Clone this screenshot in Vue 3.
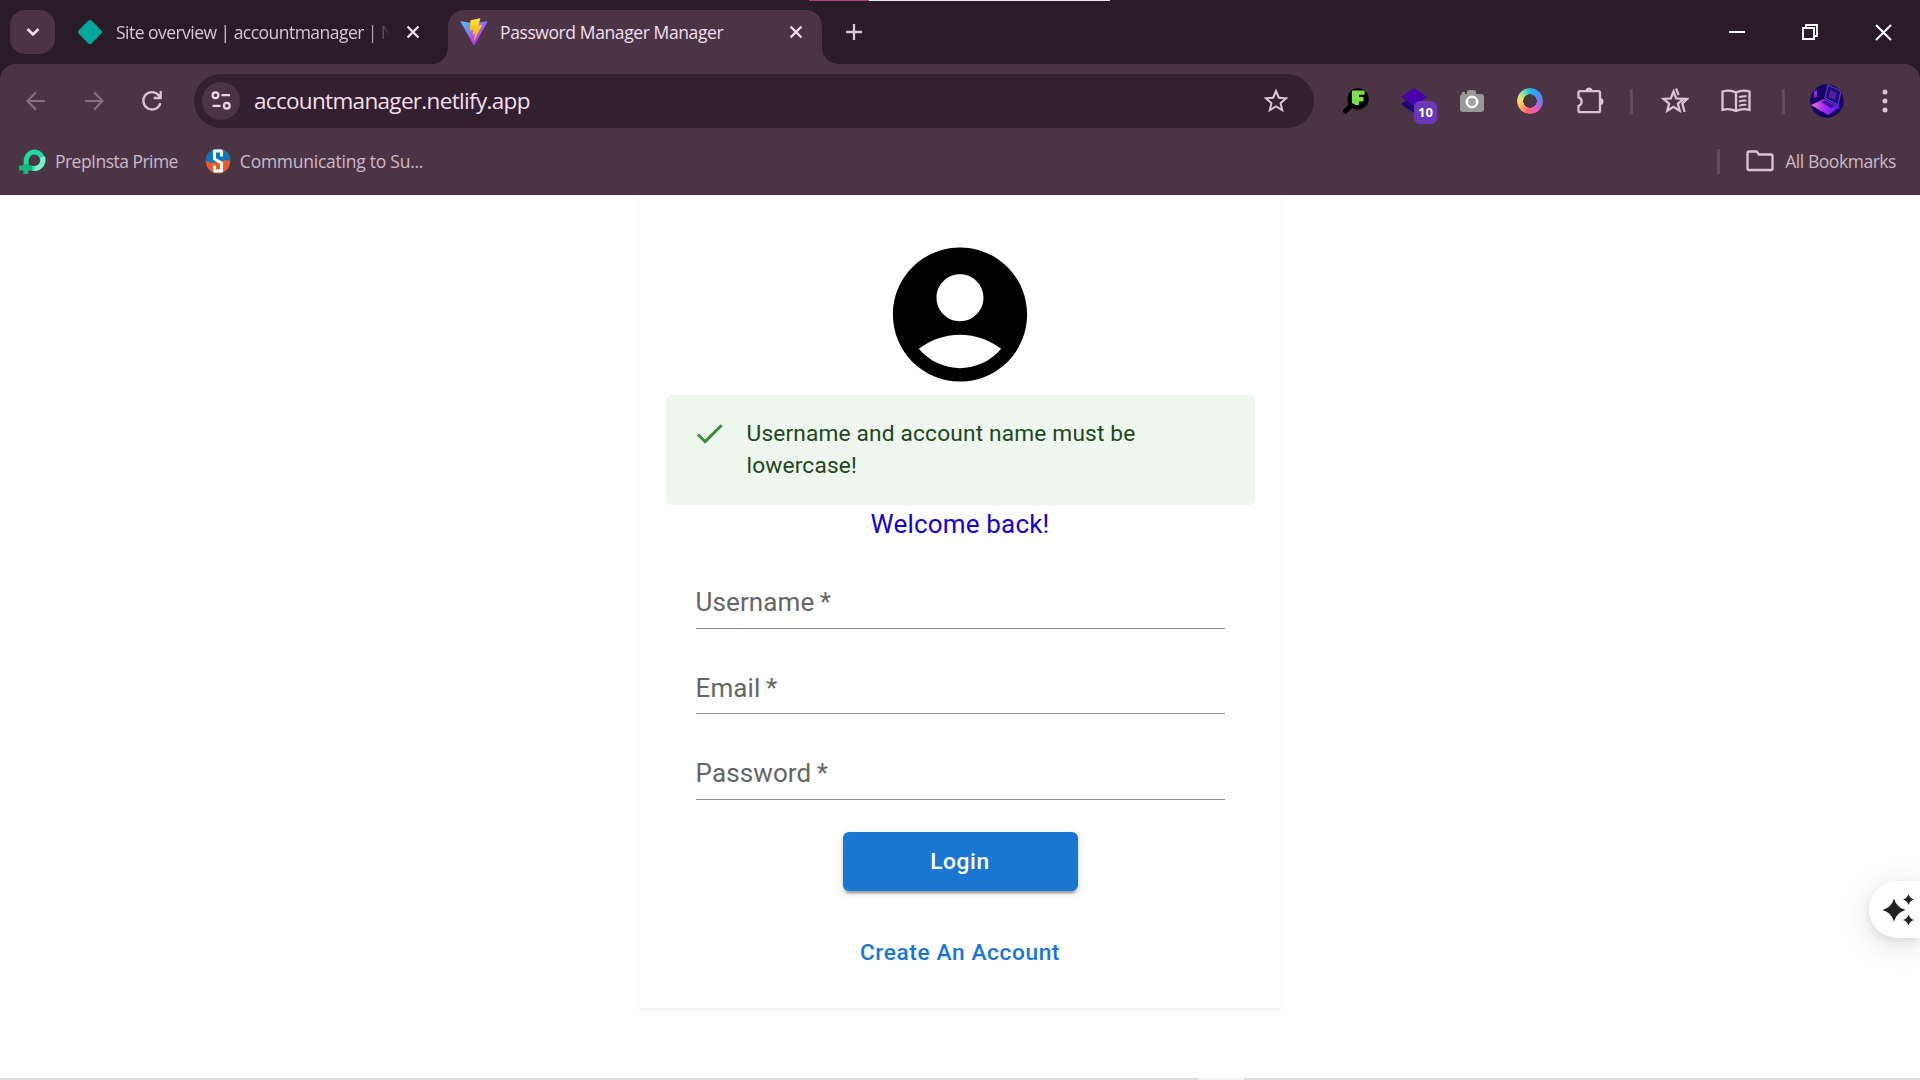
<script setup>
const fields = ['Username', 'Email', 'Password']
</script>

<template>
  <div class="screen">
    <header class="browser">
      <div class="tabstrip">
        <div class="progress"></div>
        <button class="tabsearch">
          <svg width="14" height="10" viewBox="0 0 14 10"><path d="M1.5 2 7 7.5 12.500 2" fill="none" stroke="#f3dcee" stroke-width="2.6" /></svg>
        </button>
        <div class="tab idle">
          <svg class="fav" width="26" height="26" viewBox="0 0 26 26"><path d="M11.400 1.600q1.600-1.300 3.200 0l9.800 9.800q1.300 1.600 0 3.200l-9.800 9.800q-1.600 1.300-3.200 0l-9.800-9.800q-1.300-1.600 0-3.200z" fill="#00a89c" /></svg>
          <span class="title one">Site overview | accountmanager | N</span>
          <svg class="x" width="14" height="14" viewBox="0 0 14 14"><path d="M1.500 1.500l11 11m0-11l-11 11" stroke="#f0dcea" stroke-width="2.300" /></svg>
        </div>
        <div class="tab active">
          <svg class="fav" width="28" height="28" viewBox="0 0 410 404">
            <defs>
              <linearGradient id="va" x1="6" y1="33" x2="235" y2="344" gradientUnits="userSpaceOnUse"><stop stop-color="#41d1ff" /><stop offset="1" stop-color="#bd34fe" /></linearGradient>
              <linearGradient id="vb" x1="194.650" y1="8.800" x2="236" y2="293" gradientUnits="userSpaceOnUse"><stop stop-color="#ffea83" /><stop offset=".083" stop-color="#ffdd35" /><stop offset="1" stop-color="#ffa800" /></linearGradient>
            </defs>
            <path fill="url(#va)" d="M399.600 59.500 215.600 388.500c-3.800 6.800-13.500 6.800-17.300.1L10.600 59.500c-4.200-7.300 2.100-16.200 10.400-14.700l184.200 32.900c1.200.2 2.400.2 3.500 0l180.300-32.900c8.300-1.500 14.600 7.300 10.600 14.700z" />
            <path fill="url(#vb)" d="M293 1.600 156.800 28.200c-2.200.4-3.900 2.300-4 4.600l-8.400 141.500c-.2 3.300 2.900 5.900 6.100 5.200l37.900-8.800c3.600-.8 6.800 2.300 6 5.900l-11.300 55.200c-.8 3.700 2.700 6.900 6.300 5.800l23.500-7.100c3.600-1.100 7.100 2.100 6.300 5.800l-17.900 86.600c-1.100 5.400 6.100 8.400 9.100 3.700l2-3.100 111-221.400c1.900-3.700-1.400-7.900-5.400-7.200l-39 7.600c-3.700.7-6.800-2.800-5.800-6.300L298.700 7.900c1-3.600-2.100-7-5.700-6.300z" />
          </svg>
          <span class="title two">Password Manager Manager</span>
          <svg class="x" width="14" height="14" viewBox="0 0 14 14"><path d="M1.500 1.500l11 11m0-11l-11 11" stroke="#f5e0f0" stroke-width="2.300" /></svg>
        </div>
        <svg class="plus" width="18" height="18" viewBox="0 0 18 18"><path d="M9 1v16M1 9h16" stroke="#dcc6d8" stroke-width="2.300" /></svg>
        <div class="window">
          <svg width="16" height="16"><path d="M0 8h16" stroke="#fff" stroke-width="2" /></svg>
          <svg width="16" height="16"><path d="M1 4h11v11H1zM4 4V1h11v11h-3" fill="none" stroke="#fff" stroke-width="1.800" /></svg>
          <svg width="17" height="17"><path d="M1 1l15 15M16 1L1 16" stroke="#fff" stroke-width="2" /></svg>
        </div>
      </div>

      <div class="toolbar">
        <svg class="back" width="20" height="20" viewBox="0 0 20 20"><path d="M19 10H2M10 1.200 1.500 10l8.500 8.800" fill="none" stroke="#8a7085" stroke-width="2.100" /></svg>
        <svg class="forward" width="20" height="20" viewBox="0 0 20 20"><path d="M1 10h17M10 1.200l8.500 8.800-8.500 8.800" fill="none" stroke="#8a7085" stroke-width="2.100" /></svg>
        <svg class="reload" width="22" height="22" viewBox="0 0 22 22"><path d="M19.400 13.100A8.700 8.700 0 1 1 17.700 5.200L19.500 7M19.700 1v7h-7" fill="none" stroke="#dcc3d8" stroke-width="2.300" /></svg>
        <div class="omnibox">
          <span class="tune"><svg width="20" height="20" viewBox="0 0 20 20" fill="none" stroke="#ecd7e8" stroke-width="2.200"><circle cx="4.500" cy="4.200" r="2.900" /><path d="M10.500 4.200h8.500M1.500 14.800h8" /><circle cx="15.800" cy="14.800" r="2.900" /></svg></span>
          <span class="url">accountmanager.netlify.app</span>
          <svg class="star" width="30" height="30" viewBox="0 0 24 24"><path fill="#dcc3d8" d="m22 9.240-7.190-.62L12 2 9.190 8.630 2 9.240l5.460 4.730L5.820 21 12 17.270 18.180 21l-1.630-7.030zM12 15.400l-3.760 2.270 1-4.280-3.320-2.880 4.380-.38L12 6.100l1.710 4.040 4.380.38-3.320 2.880 1 4.280z" /></svg>
        </div>
        <div class="extensions">
          <svg class="e1" width="28" height="28" viewBox="0 0 28 28"><path d="M10 17.500 3.500 24" stroke="#000" stroke-width="5" stroke-linecap="round" /><circle cx="16" cy="12" r="10.700" fill="#000" /><path d="M10 3.500h12.500v4.200H17v2.400h4.500v4.500H17v3.400h-3.500l-3.500-2z" fill="#7be04a" /></svg>
          <div class="e2">
            <svg width="28" height="28" viewBox="0 0 28 28"><path d="m1 17 13-8 13 8-13 9z" fill="#1d0070" /><path d="m1 10 13-9 13 9-13 9z" fill="#4700ac" /></svg>
            <span class="badge">10</span>
          </div>
          <svg class="e3" width="26" height="24" viewBox="0 0 26 24"><path d="M8 5V3q0-2 2-2h5q2 0 2 2v2h5q3 0 3 3v12q0 3-3 3H4q-3 0-3-3V8q0-2 2-3V3h3v2z" fill="#999" /><circle cx="13" cy="13" r="5.200" fill="#a4a4a4" stroke="#fff" stroke-width="2.400" /></svg>
          <span class="ring"></span>
          <svg class="puzzle" width="28" height="28" viewBox="0 0 28 28"><path d="M4 4.200h18.500q1.500 0 1.500 1.500v18q0 1.500-1.500 1.500H4q-1.500 0-1.500-1.500v-4.800a4.500 4.500 0 0 0 0-8.600V5.700q0-1.500 1.500-1.500z" fill="none" stroke="#dcc3d8" stroke-width="2.300" /><path d="M9.500 4a3.500 3.500 0 0 1 7 0zM24 11a3.500 3.500 0 0 1 0 7z" fill="#dcc3d8" /></svg>
        </div>
        <i class="rule r1"></i>
        <svg class="favs" width="28" height="26" viewBox="0 0 28 26"><path d="M12.500 3.500l2.700 6.800 7.300.6-5.600 4.700 1.800 7.100-6.200-3.900-6.200 3.900 1.800-7.100-5.600-4.700 7.300-.6z" fill="none" stroke="#dcc3d8" stroke-width="2.300" /><path d="M15 .5l2.700 6.500M20.800 10.900h5.400l-4.900 4.500 2.300 8.600" fill="none" stroke="#dcc3d8" stroke-width="2.200" /></svg>
        <svg class="book" width="30" height="24" viewBox="0 0 30 24" fill="none" stroke="#dcc3d8" stroke-width="2.300"><path d="M15 3.500q-6-3-13.500-1v18.300q7-2 13.500 1.200 6.500-3.200 13.500-1.200V2.500q-7.500-2-13.500 1zV22" /><path d="M18 8.200q3.500-1.300 7.500-.9M18 12.500q3.500-1.300 7.500-.9M18 16.800q3.500-1.300 7.500-.9" stroke-width="1.900" /></svg>
        <i class="rule r2"></i>
        <svg class="profile" width="34" height="34" viewBox="0 0 34 34">
          <defs><clipPath id="pc"><circle cx="17" cy="17" r="16.700" /></clipPath><linearGradient id="pg"><stop stop-color="#f07ac8" /><stop offset=".45" stop-color="#a72af5" /><stop offset="1" stop-color="#4b1bf0" /></linearGradient></defs>
          <g clip-path="url(#pc)"><path d="M0 0h34v34H0z" fill="#150363" /><path d="m18 1 13 6-3 14-13-7z" fill="#1f0c7c" stroke="#6336b8" stroke-width="1.200" /><path d="m20 6 7 3-2 7-6-3z" fill="#51209f" /><path d="m1 21 13-6 16 8-12 8z" fill="url(#pg)" /><path d="m11 18 4-1.500 10 5-4 2.500z" fill="#3a129c" /><path d="M4 7l3-1v7l-3 1z" fill="#8a2be0" /></g>
        </svg>
        <svg class="more" width="6" height="24" viewBox="0 0 6 24" fill="#dcc3d8"><circle cx="3" cy="3" r="2.500" /><circle cx="3" cy="12" r="2.500" /><circle cx="3" cy="21" r="2.500" /></svg>
      </div>

      <div class="bookmarks">
        <svg class="prep" width="27" height="27" viewBox="0 0 27 27" fill="none"><path d="M7.200 19.500V11.500A8.200 8.200 0 1 1 15.400 20.500H13" stroke="#1fdd9c" stroke-width="5" /><path d="M15.400 20.500A8.600 8.600 0 0 0 23.500 9" stroke="#7cf0c6" stroke-width="5" /><path d="M0 20h13M6.800 16v10" stroke="#13b981" stroke-width="5" /></svg>
        <span class="b1">PrepInsta Prime</span>
        <svg class="comm" width="26" height="26" viewBox="0 0 26 26"><circle cx="13" cy="13" r="12.300" fill="#ef5a2a" /><path d="M.7 13a12.300 12.300 0 0 1 24.600 0q-6-2-12.300 1-6 2-12.300-1z" fill="#0879be" /><path d="M16.500 8.500V3h-7v8l7 4v8h-7v-5.500" fill="none" stroke="#fff" stroke-width="3" stroke-linejoin="round" /></svg>
        <span class="b2">Communicating to Su...</span>
        <i class="rule"></i>
        <svg class="folder" width="28" height="22" viewBox="0 0 28 22"><path d="M3 1.500h7.500L13 4.500h12q1.500 0 1.500 1.500v12.500q0 1.500-1.500 1.500H3q-1.500 0-1.500-1.500V3Q1.500 1.500 3 1.500z" fill="none" stroke="#dcc3d8" stroke-width="2.300" /></svg>
        <span class="b3">All Bookmarks</span>
      </div>
    </header>

    <main class="page">
      <section class="card">
        <svg class="avatar" viewBox="0 0 24 24"><path d="M12 2C6.480 2 2 6.480 2 12s4.480 10 10 10 10-4.480 10-10S17.520 2 12 2m0 4c1.930 0 3.500 1.570 3.500 3.500S13.930 13 12 13s-3.500-1.570-3.500-3.500S10.070 6 12 6m0 14c-2.030 0-4.430-.82-6.140-2.880C7.550 15.800 9.680 15 12 15s4.450.8 6.140 2.120C16.430 19.180 14.030 20 12 20" /></svg>
        <div class="alert">
          <svg class="tick" viewBox="0 0 24 24"><path d="M9 16.170 4.830 12l-1.420 1.410L9 19 21 7l-1.410-1.410z" fill="#388e3c" /></svg>
          <span>Username and account name must be lowercase!</span>
        </div>
        <div class="welcome">Welcome back!</div>
        <form class="form" @submit.prevent>
          <div v-for="name in fields" :key="name" class="field">{{ name }}&thinsp;*</div>
        </form>
        <button class="login">Login</button>
        <a class="create">Create An Account</a>
      </section>
      <div class="assistant">
        <svg width="34" height="34" viewBox="0 0 34 34" fill="#222"><path d="M12 5.500q2.500 9 11.500 11.500-9 2.500-11.500 11.500Q9.500 19.500.5 17 9.500 14.500 12 5.500zM26.500 1q1.300 4.300 5.500 5.500-4.200 1.200-5.500 5.500-1.300-4.300-5.500-5.500 4.200-1.200 5.500-5.500zM26.500 21.500q1.300 4.300 5.500 5.500-4.200 1.200-5.500 5.500-1.300-4.300-5.500-5.500 4.200-1.200 5.500-5.500z" /></svg>
      </div>
      <div class="edge"></div>
    </main>
  </div>
</template>

<style>
body { background: #fff; overflow: hidden; }
</style>

<style scoped>
* { box-sizing: border-box; }
svg { flex: none; display: block; }
button { border: 0; padding: 0; }
.screen { width: 1920px; height: 1080px; overflow: hidden; display: flex; flex-direction: column; background: #fefefe; }
.browser { height: 195px; flex: none; background: #2b1b28; font-family: "Open Sans", "Noto Sans", sans-serif; white-space: nowrap; }
.tabstrip { height: 64px; display: flex; padding-left: 10px; position: relative; }
.progress { position: absolute; left: 809px; top: 0; width: 301px; height: 1px; background: linear-gradient(90deg, #b03c78 60px, #f0e8ee 60px); }
.tabsearch { width: 45px; height: 44px; margin-top: 10px; border-radius: 15px; background: #4b3545; display: flex; align-items: center; justify-content: center; flex: none; }
.tab { display: flex; align-items: center; flex: none; }
.idle { width: 393px; padding-left: 22px; }
.fav { flex: none; }
.title { font-size: 17.500px; line-height: 24px; color: #d9c5d4; flex: none; }
.one { width: 284px; margin-left: 13px; overflow: hidden; letter-spacing: -0.530px; mask-image: linear-gradient(90deg, #000 252px, transparent 274px); }
.idle .x { margin-left: 6px; }
.active { width: 374px; height: 54px; margin-top: 10px; padding: 0 19px 10px 12px; background: #4b3545; border-radius: 16px 16px 0 0; position: relative; }
.active::before, .active::after { content: ""; position: absolute; bottom: 0; width: 16px; height: 16px; }
.active::before { left: -16px; background: radial-gradient(circle at 0 0, transparent 15.500px, #4b3545 16px); }
.active::after { right: -16px; background: radial-gradient(circle at 100% 0, transparent 15.500px, #4b3545 16px); }
.two { margin-left: 12px; color: #f3dfee; letter-spacing: -0.400px; }
.active .x { margin-left: auto; }
.plus { margin: 23px 0 0 23px; }
.window { margin-left: auto; display: flex; align-items: center; gap: 57px; padding-right: 28px; }
.toolbar { height: 74px; background: #4b3545; border-radius: 16px 16px 0 0; display: flex; align-items: center; padding: 0 32px 0 26px; }
.forward { margin-left: 38px; }
.reload { margin-left: 37px; }
.omnibox { width: 1120px; height: 54px; margin-left: 31px; border-radius: 27px; background: #33202e; display: flex; align-items: center; padding: 0 23px 0 8px; flex: none; }
.tune { width: 38px; height: 38px; border-radius: 50%; background: #4b3545; display: flex; align-items: center; justify-content: center; }
.url { margin-left: 14px; font-size: 22.500px; line-height: 30px; color: #f4dfee; letter-spacing: -0.680px; }
.star { margin-left: auto; }
.extensions { display: flex; align-items: center; margin-left: 28px; flex: none; }
.e2 { width: 28px; height: 28px; margin-left: 30px; position: relative; }
.badge { position: absolute; left: 14px; top: 14px; width: 23px; height: 23px; border-radius: 6px; background: #6838b8; color: #fff; font: bold 13px/23px "Open Sans", sans-serif; text-align: center; }
.e3 { margin-left: 31px; }
.ring { width: 26px; height: 26px; margin-left: 32px; border-radius: 50%; background: conic-gradient(#20b8e8, #6d7cf0 90deg, #e45ac0 140deg, #ff5f7a 190deg, #ffa35c 230deg, #ffe36b 275deg, #7fe6a0 320deg, #20b8e8); mask-image: radial-gradient(circle, transparent 6.500px, #000 7px); }
.puzzle { margin-left: 33px; }
.rule { width: 3px; height: 25px; background: #664a60; flex: none; }
.r1 { margin-left: 26px; }
.favs { margin-left: 28px; }
.book { margin-left: 32px; }
.r2 { margin-left: 31px; }
.profile { margin-left: 25px; }
.more { margin-left: auto; }
.bookmarks { height: 57px; background: #4b3545; display: flex; align-items: center; padding: 0 24px 11px 19px; font-size: 17.500px; line-height: 24px; color: #cdb9c8; }
.b1 { margin-left: 9px; letter-spacing: -0.530px; }
.comm { margin-left: 27px; }
.b2 { margin-left: 9px; letter-spacing: -0.250px; }
.bookmarks .rule { margin-left: auto; }
.folder { margin-left: 26px; }
.b3 { margin-left: 11px; letter-spacing: -0.450px; }

.page { flex: 1; position: relative; font-family: Roboto, sans-serif; overflow: hidden; }
.card { width: 642px; height: 813px; margin: 0 auto; background: #fefefe; box-shadow: 0 2px 4px rgba(0, 0, 0, 0.060); display: flex; flex-direction: column; align-items: center; padding: 39px 26px 0; }
.avatar { width: 162px; height: 161px; }
.alert { width: 589px; height: 110px; flex: none; background: #edf7ed; border-radius: 6px; display: flex; padding: 23px 26px 21px; color: #1e4620; font-size: 22.700px; line-height: 32px; letter-spacing: 0.170px; }
.tick { width: 35px; height: 35px; margin: -2px 20px 0 0; }
.welcome { height: 38px; line-height: 38px; font-size: 26px; letter-spacing: 0.180px; color: #1500d2; }
.form { width: 529px; }
.field { height: 85.500px; padding-top: 41px; line-height: 37px; font-size: 26px; letter-spacing: 0.120px; color: #666; border-bottom: 1px solid #8c8c8c; }
.login { width: 235px; height: 59px; margin-top: 32px; flex: none; background: #1976d2; color: #fff; border-radius: 6px; font: 500 22.700px/59px Roboto, sans-serif; letter-spacing: 0.640px; box-shadow: 0 5px 2px -3px rgba(0, 0, 0, 0.200), 0 3px 3px rgba(0, 0, 0, 0.140), 0 2px 8px rgba(0, 0, 0, 0.120); }
.create { margin-top: 42px; line-height: 40px; font-size: 22.700px; font-weight: 500; letter-spacing: 0.600px; color: #1976d2; }
.assistant { position: absolute; right: 0; top: 686px; width: 51px; height: 57px; border-radius: 28px 0 0 28px; background: #fff; box-shadow: 0 6px 30px rgba(0, 0, 0, 0.120), 0 3px 8px rgba(0, 0, 0, 0.080); display: flex; align-items: center; padding-left: 13px; }
.edge { position: absolute; left: 0; bottom: 0; width: 100%; height: 2px; background: linear-gradient(90deg, #dedede 1199px, #f4f4f4 1199px, #f4f4f4 1244px, #dedede 1244px); }
</style>
